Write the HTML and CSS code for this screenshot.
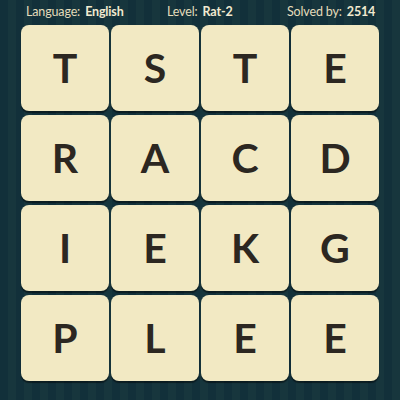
FILE: index.html
```html
<!DOCTYPE html>
<html>
<head>
<meta charset="utf-8">
<link rel="stylesheet" href="styles.css">
</head>
<body>
<div class="page">
  <div class="header">
    <div class="item lang">Language: <b>English</b></div>
    <div class="item level">Level: <b>Rat-2</b></div>
    <div class="item solved">Solved by: <b>2514</b></div>
  </div>
  <div class="board">
    <div class="tile">T</div><div class="tile">S</div><div class="tile">T</div><div class="tile">E</div>
    <div class="tile">R</div><div class="tile">A</div><div class="tile">C</div><div class="tile">D</div>
    <div class="tile">I</div><div class="tile">E</div><div class="tile">K</div><div class="tile">G</div>
    <div class="tile">P</div><div class="tile">L</div><div class="tile">E</div><div class="tile">E</div>
  </div>
</div>
</body>
</html>
```
FILE: styles.css
```css
html, body {
  margin: 0;
  padding: 0;
}
body {
  width: 400px;
  height: 400px;
  overflow: hidden;
  background-color: #14333a;
  background-image: repeating-linear-gradient(90deg,
    #12303a 0px, #12303a 8px,
    #17363d 8px, #17363d 16px);
  font-family: Lato, "Open Sans", sans-serif;
}
.page {
  width: 400px;
  height: 400px;
  display: flex;
  flex-direction: column;
}
.header {
  height: 25px;
  display: flex;
  align-items: center;
  color: #e4dcbb;
  font-size: 12.5px;
  letter-spacing: -0.15px;
  padding-left: 26px;
  padding-bottom: 2px;
  box-sizing: border-box;
}
.header b {
  font-weight: 700;
  color: #f1ead0;
  margin-left: 2px;
}
.lang { width: 141px; }
.level { width: 120px; }
.board {
  margin-left: 21px;
  display: grid;
  grid-template-columns: repeat(4, 88px);
  grid-template-rows: repeat(4, 86px);
  column-gap: 2px;
  row-gap: 4px;
}
.tile {
  background: #f2e9c3;
  border-radius: 8px;
  box-shadow: 0 2px 1px rgba(0, 0, 0, 0.45);
  display: flex;
  align-items: center;
  justify-content: center;
  font-size: 41px;
  font-weight: 700;
  color: #2c2721;
  padding-bottom: 2px;
  box-sizing: border-box;
}
```
